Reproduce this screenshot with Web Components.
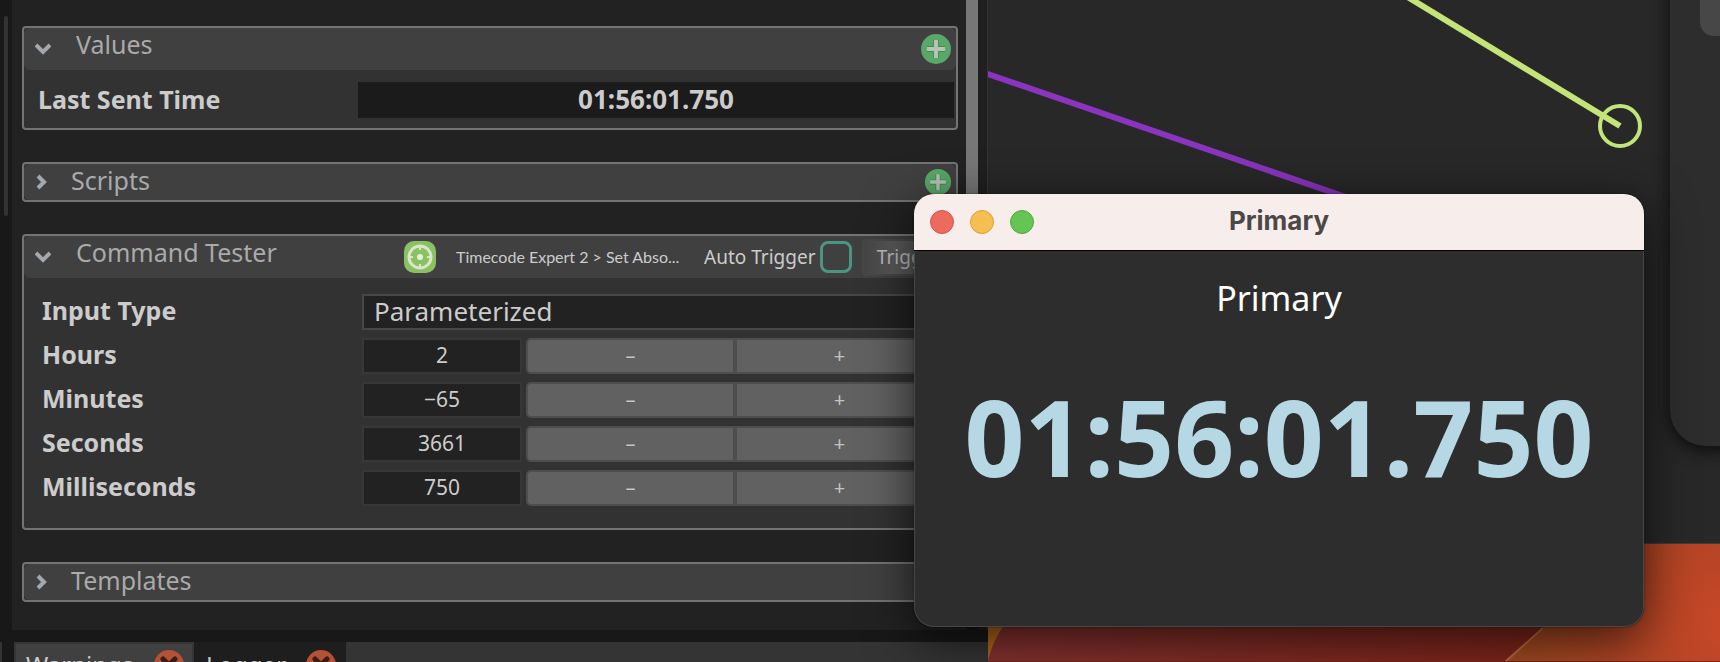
<!DOCTYPE html>
<html lang="en">
<head>
<meta charset="utf-8">
<title>Primary</title>
<style>
html,body{height:100%}
body{margin:0;background:#181818;font-family:"Noto Sans","Open Sans",sans-serif;color:#ccc;overflow:hidden}
</style>
</head>
<body>
<show-desktop></show-desktop>
<script>
class Base extends HTMLElement{
  constructor(){super();this.attachShadow({mode:'open'});}
  connectedCallback(){if(!this.shadowRoot.firstChild)this.shadowRoot.innerHTML='<style>*{box-sizing:border-box}</style>'+this.view();}
}
customElements.define('add-button',class extends Base{
  view(){return `<style>
:host{display:block;flex:none}
button{display:block;width:var(--size,32px);height:var(--size,32px);padding:0;border:0;background:none}
svg{display:block;width:100%;height:100%}
</style><button aria-label="Add"><svg viewBox="0 0 32 32"><circle cx="16" cy="16" r="15" fill="#59a869"/><path d="M16 7v18M7 16h18" stroke="#3f9145" stroke-width="6"/><path d="M16 7v18M7 16h18" stroke="#b9c1bb" stroke-width="4"/></svg></button>`}
});
customElements.define('chevron-toggle',class extends Base{
  view(){const open=this.hasAttribute('open');return `<style>
:host{display:block;flex:none;width:16px;height:16px}
button{display:block;width:16px;height:16px;padding:0;border:0;background:none}
svg{display:block}
</style><button aria-label="${open?'Collapse':'Expand'}" aria-expanded="${open}"><svg width="16" height="16" viewBox="0 0 16 16" fill="none" stroke="#a3a8ac" stroke-width="4">${open?'<path d="M1 4l7 7 7-7"/>':'<path d="M3 2l6 6-6 6"/>'}</svg></button>`}
});
customElements.define('inspector-group',class extends Base{
  view(){const open=this.hasAttribute('open');return `<style>
:host{display:block;border:2px solid #747474;border-radius:4px;background:#323232;overflow:hidden}
header{display:flex;align-items:center;height:${open?42:36}px;padding:0 4px 0 11px;background:#404040;border-radius:6px}
h2{margin:0;padding-left:${open?25:20}px;font-size:25px;line-height:32px;font-weight:400;color:#aaa;white-space:nowrap;flex:1 0 auto;align-self:flex-start}
</style><header><chevron-toggle ${open?'open':''}></chevron-toggle><h2>${this.getAttribute('heading')}</h2><slot name="tools"></slot></header><slot></slot>`}
});
customElements.define('time-row',class extends Base{
  view(){return `<style>
:host{display:flex;padding:12px 2px 10px 14px;align-items:center}
label{width:320px;font-weight:700;font-size:25px;line-height:36px;height:36px;margin-top:-2px}
output{flex:1;height:36px;background:#1b1b1b;text-align:center;font-weight:700;font-size:26px;line-height:34px}
</style><label for="t">Last Sent Time</label><output id="t">01:56:01.750</output>`}
});
customElements.define('command-tools',class extends Base{
  view(){return `<style>
:host{display:flex;align-items:center;flex:none}
svg{display:block;margin-right:20px}
.target{width:230px;margin-right:18px;font:16px/32px Lato,sans-serif;white-space:nowrap}
label{width:116px;font-size:19px;line-height:32px;white-space:nowrap}
input{appearance:none;width:32px;height:32px;margin:0 10px 0 0;border:3px solid #4a9582;border-radius:8px}
.trigger{width:90px;height:37px;padding:0 0 0 4px;border:2px solid #474747;border-radius:4px;background:linear-gradient(90deg,#444,#5a5a5a 30px);color:#bbb;font:19px/32px "Noto Sans",sans-serif}
</style>
<svg width="32" height="32" viewBox="0 0 32 32"><rect width="32" height="32" rx="10" fill="#8bc063"/><circle cx="16" cy="16" r="11" fill="none" stroke="#d6e8c8" stroke-width="3"/><path d="M16 5v4M16 23v4M5 16h4M23 16h4" stroke="#d6e8c8" stroke-width="2"/><circle cx="16" cy="16" r="3" fill="#e4f1d9"/></svg>
<span class="target">Timecode Expert 2 &gt; Set Abso...</span><label for="auto">Auto Trigger</label><input id="auto" type="checkbox"><button class="trigger">Trigger</button>`}
});
customElements.define('input-type-row',class extends Base{
  view(){return `<style>
:host{display:flex;height:36px}
label{flex:none;width:320px;font-weight:700;font-size:25px;line-height:32px}
select{appearance:none;flex:1;height:36px;padding:0 0 2px 10px;border:2px solid #474747;border-radius:0;background:#222;color:#ccc;font:26px/30px "Noto Sans",sans-serif}
</style><label for="s">Input Type</label><select id="s"><option>Parameterized</option></select>`}
});
customElements.define('number-row',class extends Base{
  view(){return `<style>
:host{display:flex;height:36px}
label{flex:none;width:320px;font-weight:700;font-size:25px;line-height:32px}
input{flex:none;width:160px;height:36px;margin:0 4px 0 0;padding:0 0 2px;border:2px solid #373737;border-radius:0;background:#222;color:#ccc;text-align:center;font:21px/30px "Noto Sans",sans-serif}
div{display:flex;flex:1}
button{flex:1;height:36px;padding:0;border:2px solid #4e4e4e;background:#616161;color:#c4c4c4;font:20px/28px "Noto Sans",sans-serif}
button:first-child{border-radius:5px 0 0 5px}
button:last-child{border-radius:0 5px 5px 0}
</style><label for="n">${this.getAttribute('label')}</label><input id="n" type="text" value="${this.getAttribute('value')}"><div><button aria-label="Decrease">–</button><button aria-label="Increase">+</button></div>`}
});
customElements.define('inspector-panel',class extends Base{
  view(){return `<style>
:host{display:flex;flex:1;min-height:0;padding-left:12px;position:relative}
.track{position:absolute;left:4px;top:16px;width:4px;height:200px;border-radius:2px;background:#333}
main{flex:1;display:flex;flex-direction:column;gap:32px;padding:26px 8px 28px 10px;background:#222}
.rows{display:flex;flex-direction:column;gap:8px;padding:16px 12px 22px 18px}
.bar{width:12px;margin-bottom:20px;background:#777}
.edge{width:10px;background:#1f1f1f;border-right:1px solid #343434}
</style><div class="track"></div><main>
<inspector-group heading="Values" open><add-button slot="tools"></add-button><time-row></time-row></inspector-group>
<inspector-group heading="Scripts"><add-button slot="tools" style="--size:28px"></add-button></inspector-group>
<inspector-group heading="Command Tester" open><command-tools slot="tools"></command-tools><div class="rows">
<input-type-row></input-type-row>
<number-row label="Hours" value="2"></number-row><number-row label="Minutes" value="−65"></number-row><number-row label="Seconds" value="3661"></number-row><number-row label="Milliseconds" value="750"></number-row>
</div></inspector-group>
<inspector-group heading="Templates"></inspector-group>
</main><div class="bar"></div><div class="edge"></div>`}
});
customElements.define('log-tabs',class extends Base{
  view(){const x='<svg width="30" height="30" viewBox="0 0 30 30"><circle cx="15" cy="15" r="15" fill="#b35235"/><path d="M9 9l12 12M21 9L9 21" stroke="#3a1c14" stroke-width="5" stroke-linecap="round"/></svg>';return `<style>
:host{display:flex;flex:none;height:20px;margin-top:12px;border-left:2px solid #343434;overflow:hidden;background:#343434}
nav{display:flex;flex:1;border-left:12px solid #181818;align-items:flex-start}
button{display:flex;align-items:center;justify-content:space-between;width:180px;height:46px;padding:0 8px 0 10px;border:2px solid #363636;background:#404040;color:#ccc;font:24px/32px "Noto Sans",sans-serif}
button+button{width:152px;background:#1e1e1e;border-color:#1e1e1e}
svg{display:block;flex:none}
</style><nav><button>Warnings ${x}</button><button>Logger ${x}</button></nav>`}
});
customElements.define('stage-canvas',class extends Base{
  view(){return `<style>
:host{display:flex;flex-direction:column;flex:732 1 0;min-width:0;background:#7c2419}
.stage{position:relative;flex:544 1 0;min-height:0;background:#282828;border-bottom:1px solid #3d3d3d;overflow:hidden}
.wall{flex:118 1 0;min-height:0;overflow:hidden;position:relative}
svg{display:block}
.side{position:absolute;right:-40px;top:-60px;width:90px;height:506px;border-radius:36px;background:#2d2d2d;box-shadow:0 4px 16px 2px #101010}
.chip{position:absolute;right:-20px;top:-40px;width:40px;height:76px;border-radius:14px;background:#474747}
</style>
<div class="stage"><svg width="732" height="540" fill="none"><path d="M-6 72L384 206" stroke="#8a34bf" stroke-width="6"/><path d="M418-4L632 126" stroke="#c2e478" stroke-width="6"/><circle cx="632" cy="126" r="20" stroke="#c2e478" stroke-width="4"/></svg><div class="side"></div><div class="chip"></div></div>
<div class="wall"><svg width="732" height="117"><defs><radialGradient id="o" gradientUnits="userSpaceOnUse" cx="740" cy="80" r="230"><stop offset="0" stop-color="#c74728"/><stop offset=".5" stop-color="#ae4424"/><stop offset="1" stop-color="#9c4a20"/></radialGradient><linearGradient id="r"><stop offset="0" stop-color="#85322f"/><stop offset="1" stop-color="#7a2013"/></linearGradient></defs><rect width="732" height="118" fill="url(#r)"/><path d="M0 70L18 78Q6 94 0 116Z" fill="#b5651d"/><path d="M650 0H732V118H517L650 0Z" fill="url(#o)"/><path d="M517 118L555 84" stroke="#bd6840" stroke-width="2"/></svg></div>`}
});
customElements.define('clock-window',class extends Base{
  view(){return `<style>
:host{display:block;position:absolute;left:914px;top:194px;width:730px;border-radius:20px;background:#2d2d2d;box-shadow:0 0 2px #0008,0 12px 50px #000a;overflow:hidden}
header{display:grid;grid-template-columns:1fr auto 1fr;align-items:center;height:57px;padding:0 16px;background:#f7eeeb;border-bottom:1px solid #000}
.lights{display:flex;gap:16px}
.lights button{width:24px;height:24px;padding:0;border:1px solid #d3554b;border-radius:50%;background:#ed6a5f}
.lights button:nth-child(2){background:#f5bf4f;border-color:#d8a03c}
.lights button:nth-child(3){background:#65c554;border-color:#50a73d}
h1{margin:0;padding-bottom:2px;font:700 26px/32px Inter,sans-serif;color:#4b4847}
section{height:376px;border:1px solid #474747;border-top:0;border-radius:0 0 20px 20px;text-align:center}
p{margin:0;padding-top:24px;font-size:34px;line-height:46px;color:#fff}
time{display:block;padding-top:46px;font-size:105px;line-height:140px;font-weight:700;color:#b6d8e4}
</style><header><div class="lights"><button aria-label="Close"></button><button aria-label="Minimize"></button><button aria-label="Zoom"></button></div><h1>Primary</h1><span></span></header><section><p>Primary</p><time>01:56:01.750</time></section>`}
});
customElements.define('show-desktop',class extends Base{
  view(){return `<style>
:host{display:flex;min-height:100vh;position:relative;overflow:hidden}
.left{display:flex;flex-direction:column;flex:988 1 0;min-width:0}
</style><div class="left"><inspector-panel></inspector-panel><log-tabs></log-tabs></div><stage-canvas></stage-canvas><clock-window></clock-window>`}
});
</script>
</body>
</html>
